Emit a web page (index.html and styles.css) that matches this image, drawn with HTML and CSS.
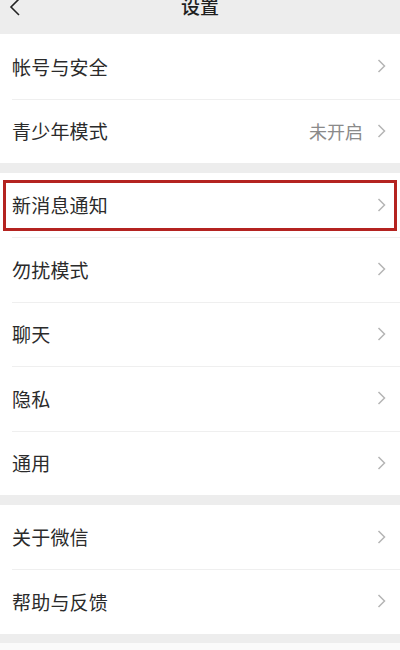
FILE: index.html
```html
<!DOCTYPE html>
<html lang="zh-CN">
<head>
<meta charset="utf-8">
<title>设置</title>
<link rel="stylesheet" href="styles.css">
</head>
<body>
<div class="page">
  <header class="navbar">
    <svg class="back" viewBox="0 0 12 18" width="12" height="18"><path d="M10 1 L2 9 L10 17" fill="none" stroke="#222" stroke-width="1.6"/></svg>
    <div class="title">设置</div>
  </header>

  <section class="group">
    <div class="row"><span class="label">帐号与安全</span><span class="arrow"><svg viewBox="0 0 9 14" width="9" height="14"><path d="M1.5 1 L7.5 7 L1.5 13" fill="none" stroke="#b5b5b5" stroke-width="1.5"/></svg></span></div>
    <div class="row"><span class="label">青少年模式</span><span class="value">未开启</span><span class="arrow"><svg viewBox="0 0 9 14" width="9" height="14"><path d="M1.5 1 L7.5 7 L1.5 13" fill="none" stroke="#b5b5b5" stroke-width="1.5"/></svg></span></div>
  </section>

  <section class="group">
    <div class="row highlighted"><span class="label">新消息通知</span><span class="arrow"><svg viewBox="0 0 9 14" width="9" height="14"><path d="M1.5 1 L7.5 7 L1.5 13" fill="none" stroke="#b5b5b5" stroke-width="1.5"/></svg></span><span class="mark"></span></div>
    <div class="row"><span class="label">勿扰模式</span><span class="arrow"><svg viewBox="0 0 9 14" width="9" height="14"><path d="M1.5 1 L7.5 7 L1.5 13" fill="none" stroke="#b5b5b5" stroke-width="1.5"/></svg></span></div>
    <div class="row"><span class="label">聊天</span><span class="arrow"><svg viewBox="0 0 9 14" width="9" height="14"><path d="M1.5 1 L7.5 7 L1.5 13" fill="none" stroke="#b5b5b5" stroke-width="1.5"/></svg></span></div>
    <div class="row"><span class="label">隐私</span><span class="arrow"><svg viewBox="0 0 9 14" width="9" height="14"><path d="M1.5 1 L7.5 7 L1.5 13" fill="none" stroke="#b5b5b5" stroke-width="1.5"/></svg></span></div>
    <div class="row"><span class="label">通用</span><span class="arrow"><svg viewBox="0 0 9 14" width="9" height="14"><path d="M1.5 1 L7.5 7 L1.5 13" fill="none" stroke="#b5b5b5" stroke-width="1.5"/></svg></span></div>
  </section>

  <section class="group">
    <div class="row"><span class="label">关于微信</span><span class="arrow"><svg viewBox="0 0 9 14" width="9" height="14"><path d="M1.5 1 L7.5 7 L1.5 13" fill="none" stroke="#b5b5b5" stroke-width="1.5"/></svg></span></div>
    <div class="row"><span class="label">帮助与反馈</span><span class="arrow"><svg viewBox="0 0 9 14" width="9" height="14"><path d="M1.5 1 L7.5 7 L1.5 13" fill="none" stroke="#b5b5b5" stroke-width="1.5"/></svg></span></div>
  </section>

  <div class="tail"></div>
</div>
</body>
</html>
```

FILE: styles.css
```css
* { box-sizing: border-box; }
html, body {
  margin: 0;
  padding: 0;
  background: #ededed;
}
body {
  font-family: "Noto Sans CJK SC", "Noto Sans", sans-serif;
  color: #2b2b2b;
  width: 400px;
  height: 650px;
  overflow: hidden;
}
.page {
  display: flex;
  flex-direction: column;
  gap: 9.5px;
}
.navbar {
  height: 34px;
  margin-bottom: -9.5px;
  display: flex;
  align-items: flex-start;
  justify-content: center;
  position: relative;
  background: #ededed;
}
.back {
  position: absolute;
  left: 9px;
  top: -2px;
}
.title {
  font-size: 19px;
  font-weight: 500;
  line-height: 12px;
  color: #1f1f1f;
  margin-left: 0px;
}
.group {
  background: #fff;
  display: flex;
  flex-direction: column;
}
.row {
  height: 64.5px;
  display: flex;
  align-items: center;
  padding: 0 14px 0 12px;
  position: relative;
}
.row + .row::before {
  content: "";
  position: absolute;
  left: 12px;
  right: 0;
  top: 0;
  border-top: 1px solid #efefef;
}
.label {
  flex: 1;
  font-size: 19px;
  color: #2b2b2b;
  letter-spacing: 0.2px;
}
.value {
  font-size: 18px;
  color: #8a8a8a;
  margin-right: 14px;
}
.arrow {
  display: flex;
  align-items: center;
}
.mark {
  position: absolute;
  left: 3px;
  right: 3px;
  top: 7px;
  bottom: 6px;
  border: 3px solid #b42320;
  pointer-events: none;
}
.tail {
  height: 20px;
  background: #fafafa;
}
```
